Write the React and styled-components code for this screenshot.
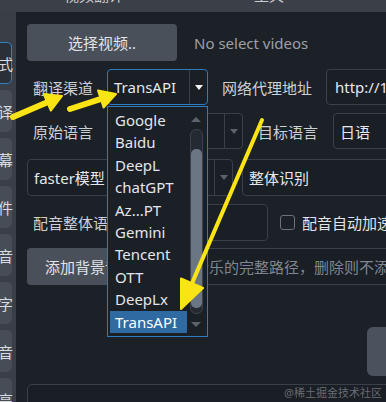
import React from "react";
import styled, { createGlobalStyle } from "styled-components";

const Global = createGlobalStyle`
  html, body { margin: 0; padding: 0; background: #1c2027; }
  body { width: 386px; height: 402px; overflow: hidden; }
  #root { width: 386px; height: 402px; }
`;

const FONT = `"Noto Sans", "Noto Sans CJK SC", sans-serif`;

const Page = styled.div`
  position: relative;
  width: 386px;
  height: 402px;
  overflow: hidden;
  display: flex;
  flex-direction: column;
  font-family: ${FONT};
  background: #1c2027;
`;

const TitleStrip = styled.div`
  height: 12px;
  flex: 0 0 12px;
  background: #3b4048;
  overflow: hidden;
  display: flex;
  gap: 130px;
  padding-left: 64px;
`;

const TitleText = styled.span`
  font-size: 15px;
  line-height: 15px;
  color: #c9ccd1;
  margin-top: -12px;
  white-space: nowrap;
`;

const Body = styled.div`
  flex: 1;
  display: flex;
  min-height: 0;
`;

const Sidebar = styled.div`
  width: 16px;
  flex: 0 0 16px;
  background: #3a3f47;
  display: flex;
  flex-direction: column;
  gap: 6px;
  padding-top: 30px;
  overflow: visible;
`;

const Tab = styled.div`
  width: 32px;
  height: 42px;
  flex: 0 0 42px;
  margin-left: -20px;
  box-sizing: border-box;
  border-radius: 5px;
  background: ${(p) => (p.$active ? "#2b3038" : "#474d56")};
  border: 1px solid ${(p) => (p.$active ? "#2f82c6" : "transparent")};
  display: flex;
  align-items: center;
  justify-content: flex-end;
  font-size: 15px;
  color: #d7dadf;
  overflow: visible;
`;

const TabChar = styled.span`
  margin-right: -2px;
  white-space: nowrap;
`;

const Main = styled.div`
  flex: 1;
  min-width: 0;
  overflow: hidden;
  padding: 12px 0 0 11px;
  display: flex;
  flex-direction: column;
`;

const Row = styled.div`
  display: flex;
  align-items: center;
  height: ${(p) => p.$h || 36}px;
  flex: 0 0 ${(p) => p.$h || 36}px;
  margin-top: ${(p) => p.$mt || 0}px;
  white-space: nowrap;
`;

const Button = styled.div`
  width: ${(p) => p.$w}px;
  flex: 0 0 ${(p) => p.$w}px;
  height: 100%;
  box-sizing: border-box;
  border-radius: 4px;
  background: #4a505a;
  color: #e2e4e8;
  font-size: 15px;
  display: flex;
  align-items: center;
  justify-content: center;
`;

const Hint = styled.span`
  margin-left: ${(p) => p.$ml || 0}px;
  font-size: 15px;
  color: #9ba1a9;
`;

const Label = styled.div`
  width: ${(p) => p.$w}px;
  flex: 0 0 ${(p) => p.$w}px;
  margin-left: ${(p) => p.$ml || 0}px;
  padding-left: ${(p) => p.$pl || 0}px;
  box-sizing: border-box;
  font-size: 15px;
  color: #cdd0d5;
`;

const Combo = styled.div`
  width: ${(p) => p.$w}px;
  flex: 0 0 ${(p) => p.$w}px;
  margin-left: ${(p) => p.$ml || 0}px;
  height: 100%;
  box-sizing: border-box;
  border: 1px solid ${(p) => (p.$focus ? "#2d7cc0" : "#3a4049")};
  border-radius: 4px;
  background: #1a1e25;
  display: flex;
  align-items: center;
  overflow: hidden;
`;

const ComboText = styled.span`
  flex: 1;
  padding-left: 6px;
  font-size: 15px;
  color: #e6e8eb;
  overflow: hidden;
`;

const ArrowBox = styled.div`
  width: 17px;
  flex: 0 0 17px;
  height: 100%;
  border-left: 1px solid #3a4049;
  display: flex;
  align-items: center;
  justify-content: center;
  &::after {
    content: "";
    border-left: 4px solid transparent;
    border-right: 4px solid transparent;
    border-top: 5px solid ${(p) => (p.$light ? "#f2f3f5" : "#5c636d")};
  }
`;

const Input = styled.div`
  width: ${(p) => p.$w}px;
  flex: 0 0 ${(p) => p.$w}px;
  margin-left: ${(p) => p.$ml || 0}px;
  height: 100%;
  box-sizing: border-box;
  border: 1px solid #3a4049;
  border-radius: 4px;
  background: #1a1e25;
  display: flex;
  align-items: center;
  padding-left: ${(p) => p.$pl || 8}px;
  font-size: 15px;
  color: ${(p) => (p.$placeholder ? "#7f868f" : "#e6e8eb")};
  overflow: hidden;
`;

const Check = styled.div`
  width: 15px;
  height: 15px;
  flex: 0 0 15px;
  box-sizing: border-box;
  margin-left: 12px;
  border: 1.5px solid #6b727c;
  border-radius: 3px;
`;

const CheckLabel = styled.span`
  margin-left: 7px;
  font-size: 15px;
  color: #e2e4e8;
`;

const RightButtonRow = styled.div`
  margin-top: 42px;
  height: 49px;
  flex: 0 0 49px;
  display: flex;
  justify-content: flex-end;
`;

const SideButton = styled.div`
  width: 30px;
  margin-right: -11px;
  border-radius: 6px;
  background: #4a525e;
`;

const BottomBox = styled.div`
  margin-top: 8px;
  height: 40px;
  flex: 0 0 40px;
  margin-right: -10px;
  box-sizing: border-box;
  border: 1px solid #3a4049;
  border-radius: 5px;
  background: #1a1e25;
`;

const Popup = styled.div`
  position: absolute;
  left: 107px;
  top: 106px;
  width: 101px;
  height: 231px;
  box-sizing: border-box;
  border: 1px solid #2d7cc0;
  background: #1b1f26;
  display: flex;
  padding: 2px;
  z-index: 5;
`;

const List = styled.div`
  flex: 1;
  display: flex;
  flex-direction: column;
`;

const Item = styled.div`
  height: 22.4px;
  line-height: 22.4px;
  padding-left: 5px;
  font-size: 15px;
  color: ${(p) => (p.$sel ? "#ffffff" : "#e4e6ea")};
  background: ${(p) => (p.$sel ? "#2f6aa2" : "transparent")};
  white-space: nowrap;
`;

const ScrollBar = styled.div`
  width: 18px;
  flex: 0 0 18px;
  display: flex;
  flex-direction: column;
  align-items: center;
`;

const ScrollArrow = styled.div`
  height: 20px;
  flex: 0 0 20px;
  display: flex;
  align-items: center;
  justify-content: center;
  &::after {
    content: "";
    border-left: 5px solid transparent;
    border-right: 5px solid transparent;
    ${(p) =>
      p.$up
        ? "border-bottom: 5px solid #5c636d;"
        : "border-top: 5px solid #5c636d;"}
  }
`;

const Track = styled.div`
  flex: 1;
  width: 13px;
  box-sizing: border-box;
  border: 1px solid #3b424c;
  border-radius: 6px;
  background: #252a32;
  display: flex;
  flex-direction: column;
  padding: 19px 0 5px;
`;

const Handle = styled.div`
  flex: 1;
  border-radius: 5px;
  background: #6a7684;
`;

const Overlay = styled.svg`
  position: absolute;
  left: 0;
  top: 0;
  width: 386px;
  height: 402px;
  pointer-events: none;
  z-index: 10;
`;

const Watermark = styled.div`
  position: absolute;
  right: 4px;
  bottom: 2px;
  font-size: 11px;
  color: rgba(200, 205, 212, 0.45);
  font-family: ${FONT};
  z-index: 11;
`;

function Arrow({ x1, y1, x2, y2, w, len, half }) {
  const dx = x2 - x1;
  const dy = y2 - y1;
  const m = Math.hypot(dx, dy);
  const ux = dx / m;
  const uy = dy / m;
  const bx = x2 - ux * len;
  const by = y2 - uy * len;
  const nx = -uy;
  const ny = ux;
  const pts = `${x2},${y2} ${bx + nx * half},${by + ny * half} ${bx - nx * half},${by - ny * half}`;
  return (
    <g fill="#fbe414" stroke="#fbe414">
      <line x1={x1} y1={y1} x2={bx + ux * 2} y2={by + uy * 2} strokeWidth={w} strokeLinecap="round" />
      <polygon points={pts} strokeWidth="2" strokeLinejoin="round" />
    </g>
  );
}

const items = ["Google", "Baidu", "DeepL", "chatGPT", "Az...PT", "Gemini", "Tencent", "OTT", "DeepLx", "TransAPI"];
const tabs = ["式", "译", "幕", "件", "音", "字", "音", "高"];

export default function App() {
  return (
    <>
      <Global />
      <Page>
        <TitleStrip>
          <TitleText>视频翻译</TitleText>
          <TitleText>工具</TitleText>
        </TitleStrip>
        <Body>
          <Sidebar>
            {tabs.map((t, i) => (
              <Tab key={i} $active={i === 0}>
                <TabChar>{t}</TabChar>
              </Tab>
            ))}
          </Sidebar>
          <Main>
            <Row $h={37}>
              <Button $w={150}>选择视频..</Button>
              <Hint $ml={17}>No select videos</Hint>
            </Row>
            <Row $h={36} $mt={8}>
              <Label $w={80} $pl={6}>翻译渠道</Label>
              <Combo $w={101} $focus>
                <ComboText>TransAPI</ComboText>
                <ArrowBox $light />
              </Combo>
              <Label $w={104} $ml={14}>网络代理地址</Label>
              <Input $w={120}>http://127.0.0.1:10809</Input>
            </Row>
            <Row $h={36} $mt={8}>
              <Label $w={80} $pl={6}>原始语言</Label>
              <Combo $w={136}>
                <ComboText>中文简</ComboText>
                <ArrowBox />
              </Combo>
              <Label $w={75} $ml={15}>目标语言</Label>
              <Combo $w={120}>
                <ComboText>日语</ComboText>
                <ArrowBox />
              </Combo>
            </Row>
            <Row $h={37} $mt={10}>
              <Combo $w={206}>
                <ComboText>faster模型</ComboText>
                <ArrowBox />
              </Combo>
              <Combo $w={200} $ml={9}>
                <ComboText>整体识别</ComboText>
                <ArrowBox />
              </Combo>
            </Row>
            <Row $h={37} $mt={8}>
              <Label $w={100} $pl={6}>配音整体语速</Label>
              <Input $w={141}>0</Input>
              <Check />
              <CheckLabel>配音自动加速</CheckLabel>
            </Row>
            <Row $h={37} $mt={7}>
              <Button $w={126}>添加背景音乐</Button>
              <Input $w={260} $ml={5} $pl={5} $placeholder>
                背景音乐的完整路径，删除则不添加
              </Input>
            </Row>
            <RightButtonRow>
              <SideButton />
            </RightButtonRow>
            <BottomBox />
          </Main>
        </Body>

        <Popup>
          <List>
            {items.map((t) => (
              <Item key={t} $sel={t === "TransAPI"}>
                {t}
              </Item>
            ))}
          </List>
          <ScrollBar>
            <ScrollArrow $up />
            <Track>
              <Handle />
            </Track>
            <ScrollArrow />
          </ScrollBar>
        </Popup>

        <Overlay viewBox="0 0 386 402">
          <Arrow x1={13} y1={117} x2={62} y2={96} w={6} len={16} half={9} />
          <Arrow x1={70} y1={109} x2={116} y2={94} w={6} len={16} half={9} />
          <Arrow x1={262} y1={120} x2={181} y2={309} w={4} len={28} half={12} />
        </Overlay>
        <Watermark>@稀土掘金技术社区</Watermark>
      </Page>
    </>
  );
}
